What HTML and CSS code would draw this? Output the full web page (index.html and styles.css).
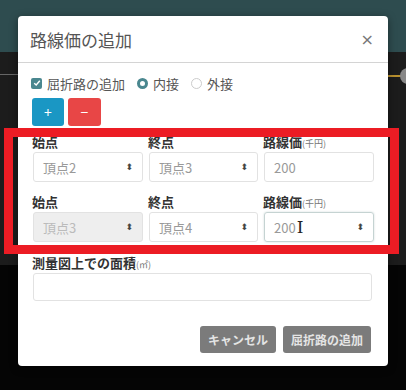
FILE: index.html
```html
<!DOCTYPE html>
<html lang="ja">
<head>
    <meta charset="UTF-8">
    <meta name="viewport" content="width=device-width, initial-scale=1.0">
    <title>路線価の追加</title>
    <link rel="stylesheet" href="styles.css">
</head>
<body>
    <div class="backdrop">
        <div class="line-left"></div>
        <div class="line-right"><span class="knob"></span></div>
        <div class="red-mark"></div>
    </div>

    <div class="modal">
        <div class="modal-header">
            <h4 class="modal-title">路線価の追加</h4>
            <span class="close">×</span>
        </div>
        <div class="modal-body">
            <div class="options">
                <label class="opt"><span class="check"><svg width="8" height="8" viewBox="0 0 8 8"><path d="M1.2 4.2 L3.2 6 L6.8 1.8" fill="none" stroke="#fff" stroke-width="1.4"/></svg></span>屈折路の追加</label>
                <label class="opt"><span class="radio on"></span>内接</label>
                <label class="opt"><span class="radio"></span>外接</label>
            </div>
            <div class="add-remove">
                <button class="btn btn-add">+</button>
                <button class="btn btn-remove">−</button>
            </div>

            <div class="row">
                <div class="field">
                    <label>始点</label>
                    <div class="control select">頂点2<span class="caret">⬍</span></div>
                </div>
                <div class="field">
                    <label>終点</label>
                    <div class="control select">頂点3<span class="caret">⬍</span></div>
                </div>
                <div class="field">
                    <label>路線価<small>(千円)</small></label>
                    <div class="control">200</div>
                </div>
            </div>

            <div class="row">
                <div class="field">
                    <label>始点</label>
                    <div class="control select disabled">頂点3<span class="caret">⬍</span></div>
                </div>
                <div class="field">
                    <label>終点</label>
                    <div class="control select">頂点4<span class="caret">⬍</span></div>
                </div>
                <div class="field">
                    <label>路線価<small>(千円)</small></label>
                    <div class="control focus">200<span class="ibeam">I</span><span class="spin">⬍</span></div>
                </div>
            </div>

            <div class="field wide">
                <label>測量図上での面積<small>(㎡)</small></label>
                <div class="control"></div>
            </div>
        </div>
        <div class="modal-footer">
            <button class="btn btn-gray">キャンセル</button>
            <button class="btn btn-gray">屈折路の追加</button>
        </div>
    </div>
</body>
</html>
```

FILE: styles.css
```css
body {
    margin: 0;
    width: 406px;
    height: 390px;
    overflow: hidden;
    font-family: "Noto Sans CJK JP", "Noto Sans", sans-serif;
    background: linear-gradient(to bottom, #2e4c4f 0 52px, #1c1c1c 52px 265px, #050505 265px);
    position: relative;
}

.backdrop .line-left {
    position: absolute;
    left: 0;
    top: 74px;
    width: 18px;
    height: 1px;
    background: #666;
}

.backdrop .line-right {
    position: absolute;
    left: 388px;
    top: 75px;
    width: 18px;
    height: 2px;
    background: #b8902f;
}

.backdrop .knob {
    position: absolute;
    left: 12px;
    top: -7px;
    width: 16px;
    height: 16px;
    border-radius: 50%;
    background: #888;
}

.red-mark {
    position: absolute;
    left: 4px;
    top: 128px;
    width: 377px;
    height: 108px;
    border: 9px solid #ec1c24;
    z-index: 5;
}

.modal {
    position: absolute;
    left: 18px;
    top: 16px;
    width: 370px;
    height: 350px;
    background: #fff;
    border-radius: 4px;
    box-shadow: 0 2px 8px rgba(0, 0, 0, 0.4);
}

.modal-header {
    height: 46px;
    border-bottom: 1px solid #d4d4d4;
    display: flex;
    align-items: center;
    justify-content: space-between;
    padding: 0 14px 0 12px;
}

.modal-title {
    margin: 0;
    font-size: 17px;
    font-weight: normal;
    color: #555;
}

.close {
    font-size: 16px;
    color: #777;
    font-family: "DejaVu Sans", sans-serif;
}

.modal-body {
    padding: 11px 15px 0 13px;
}

.options {
    display: flex;
    align-items: center;
    gap: 12px;
    height: 18px;
}

.opt {
    display: flex;
    align-items: center;
    gap: 5px;
    font-size: 13px;
    color: #555;
}

.check {
    width: 11px;
    height: 11px;
    border-radius: 2px;
    background: #4a878f;
    display: flex;
    align-items: center;
    justify-content: center;
}

.radio {
    width: 9px;
    height: 9px;
    border-radius: 50%;
    border: 1px solid #ccc;
    background: #fff;
}

.radio.on {
    border: 3px solid #4a878f;
    width: 5px;
    height: 5px;
}

.add-remove {
    display: flex;
    gap: 4px;
    margin-top: 6px;
    margin-left: 1px;
}

.btn {
    border: none;
    border-radius: 3px;
    color: #fff;
    font-family: inherit;
    cursor: pointer;
}

.btn-add, .btn-remove {
    width: 32px;
    height: 28px;
    font-size: 14px;
    padding: 0;
}

.btn-add {
    background: #1a97c4;
}

.btn-remove {
    width: 33px;
    background: #e84646;
}

.row {
    display: grid;
    grid-template-columns: 110px 109px 110px;
    column-gap: 6px;
    margin-top: 8px;
    margin-left: 2px;
}

.row + .row {
    margin-top: 12px;
}

.field label {
    display: block;
    font-size: 13px;
    font-weight: bold;
    color: #333;
    height: 16px;
    line-height: 16px;
    margin-bottom: 2px;
    margin-left: -1px;
}

.field label small {
    font-size: 9px;
    font-weight: normal;
    color: #777;
}

.control {
    height: 28px;
    border: 1px solid #e2e2e2;
    border-radius: 3px;
    display: flex;
    align-items: center;
    padding: 0 9px;
    font-size: 13px;
    color: #999;
    position: relative;
}

.select .caret, .spin {
    margin-left: auto;
    font-size: 9px;
    color: #444;
    font-family: "DejaVu Sans", sans-serif;
}

.control.disabled {
    background: #eee;
    color: #bbb;
}

.control.focus {
    border-color: #c5d3d2;
    box-shadow: 0 0 2px rgba(80, 120, 120, 0.3);
}

.ibeam {
    font-family: "DejaVu Serif", serif;
    font-size: 17px;
    color: #222;
    margin-left: 1px;
}

.wide {
    margin-top: 13px;
    margin-left: 2px;
    width: 339px;
}

.wide .control {
    height: 26px;
}

.modal-footer {
    display: flex;
    justify-content: flex-end;
    gap: 7px;
    padding: 25px 17px 0 0;
}

.btn-gray {
    background: #7b7b7b;
    color: #e4e4e4;
    height: 27px;
    font-size: 12px;
    font-weight: bold;
    padding: 0 8px;
}
```
